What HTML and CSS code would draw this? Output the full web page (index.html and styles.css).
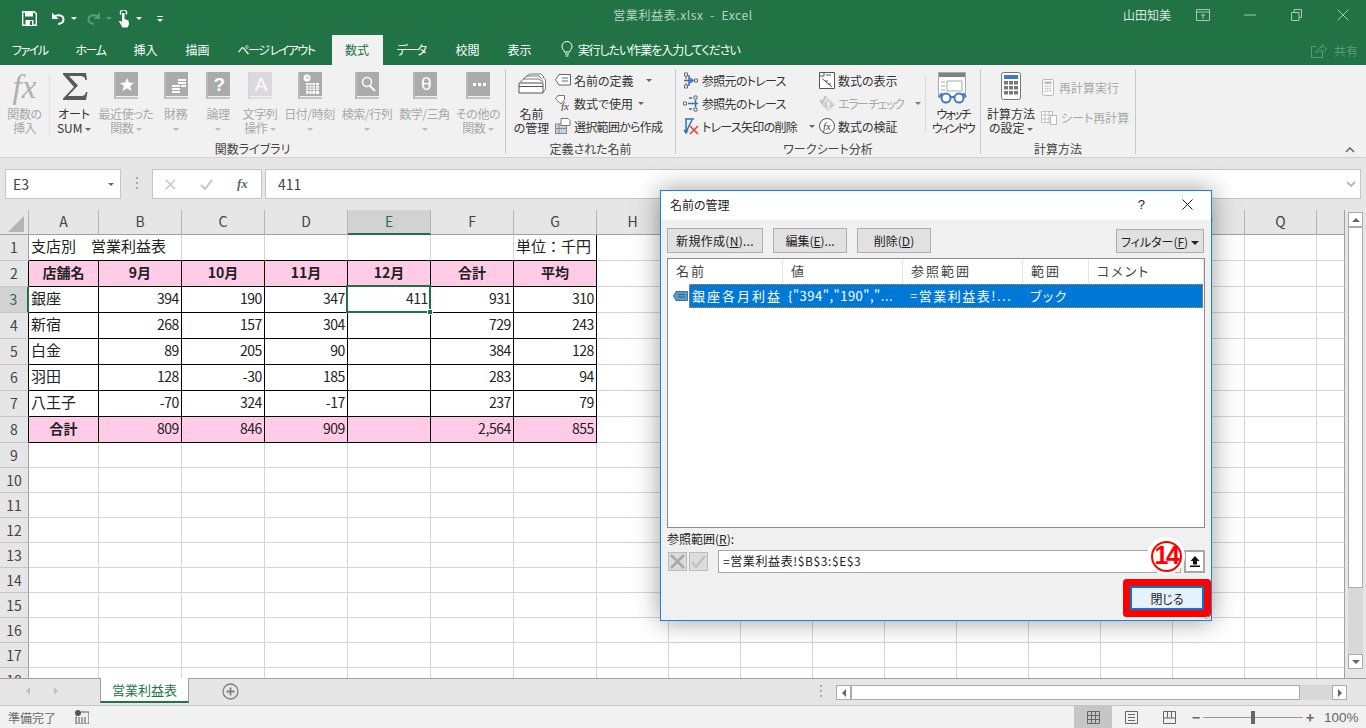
FILE: index.html
```html
<!DOCTYPE html>
<html lang="ja">
<head>
    <meta charset="UTF-8">
    <title>営業利益表.xlsx - Excel</title>
    <link rel="stylesheet" href="styles.css">
</head>
<body>
    <svg class="defs" width="0" height="0">
        <symbol id="book" viewBox="0 0 24 28">
            <rect x="0" y="0" width="2" height="27" fill="#b8b8b8"/>
            <rect x="2" y="0" width="22" height="24" fill="#ababab"/>
            <rect x="2" y="25" width="22" height="2" fill="#c4c4c4"/>
        </symbol>
        <symbol id="book-light" viewBox="0 0 24 28">
            <rect x="0" y="0" width="2" height="27" fill="#d8d4d8"/>
            <rect x="2" y="0" width="22" height="24" fill="#dcd8dc"/>
            <rect x="2" y="25" width="22" height="2" fill="#e0dce0"/>
        </symbol>
    </svg>

    <header class="titlebar">
        <div class="qat">
            <svg class="qat-save" width="15" height="15" viewBox="0 0 15 15"><path d="M.7.7h11.6l2 2v11.6H.7z" fill="none" stroke="#fff" stroke-width="1.4"/><rect x="3" y="1" width="8" height="4.5" fill="#fff"/><rect x="3.5" y="9" width="8" height="5" fill="#fff"/><rect x="8" y="10" width="2" height="4" fill="#217346"/></svg>
            <svg class="qat-undo" width="15" height="15" viewBox="0 0 15 15"><path d="M2 6.5c3-3.500 10-3 10.500 1.500.4 3.500-3 5-5.500 5" fill="none" stroke="#fff" stroke-width="2"/><path d="M1 1.500v6.500h6.500z" fill="#fff"/></svg>
            <span class="caret caret-white"></span>
            <svg class="qat-redo" width="15" height="15" viewBox="0 0 15 15"><path d="M13 6.500c-3-3.500-10-3-10.500 1.500-.4 3.500 3 5 5.500 5" fill="none" stroke="#5c9a7a" stroke-width="2"/><path d="M14 1.500v6.500h-6.500z" fill="#5c9a7a"/></svg>
            <span class="caret caret-dim"></span>
            <svg class="qat-touch" width="14" height="18" viewBox="0 0 14 18"><path d="M4 4.500a3 3 0 1 1 5 0" fill="none" stroke="#fff" stroke-width="1.400"/><path d="M5 3h2.500v6l4 1.500.5 4-1.500 3h-5L2 11.500l1-1 2 1.500z" fill="#fff"/></svg>
            <span class="caret caret-white"></span>
            <span class="qat-more"></span>
        </div>
        <div class="doc-title">営業利益表.xlsx&nbsp; -&nbsp; Excel</div>
        <div class="win-area">
            <span class="user-name">山田知美</span>
            <span class="win-btn"><svg width="14" height="12" viewBox="0 0 14 12"><path d="M.5.500h13v11H.5zM.5 3h13M7 10V5M5 7l2-2 2 2" fill="none" stroke="#a9c9b7"/></svg></span>
            <span class="win-btn"><svg width="12" height="2" viewBox="0 0 12 2"><path d="M0 1h12" stroke="#a9c9b7"/></svg></span>
            <span class="win-btn"><svg width="11" height="12" viewBox="0 0 11 12"><path d="M.5 3.500h7.500v8H.5zM3 3.500V.5h7.500v8H8" fill="none" stroke="#a9c9b7"/></svg></span>
            <span class="win-btn"><svg width="12" height="12" viewBox="0 0 12 12"><path d="M.5.500l11 11M11.500.5l-11 11" stroke="#a9c9b7"/></svg></span>
        </div>
    </header>

    <nav class="tabs">
        <span class="tab kana">ファイル</span>
        <span class="tab kana">ホーム</span>
        <span class="tab">挿入</span>
        <span class="tab">描画</span>
        <span class="tab kana">ページ レイアウト</span>
        <span class="tab active">数式</span>
        <span class="tab kana">データ</span>
        <span class="tab spaced">校閲</span>
        <span class="tab">表示</span>
        <span class="tell-me">
            <svg width="12" height="16" viewBox="0 0 12 16"><path d="M3.500 11C3 9 1 8 1 5.500a5 5 0 0 1 10 0C11 8 9 9 8.500 11zM4 13h4M4.500 15h3" fill="none" stroke="#fff"/></svg>
            <span class="tell-text">実行したい作業を入力してください</span>
        </span>
        <span class="share">
            <svg width="16" height="15" viewBox="0 0 16 15"><path d="M5 3.500H.5v11h11V10M5 10c.5-4 3-5.500 6-5.500V1.500l4.500 4.500L11 10V7.500C8.500 7.500 6.500 8 5 10z" fill="none" stroke="#5c9a7a"/></svg>
            共有
        </span>
    </nav>

    <section class="ribbon">
        <div class="group group-fn">
            <div class="group-body fn-grid">
                <div class="rb-btn off fn-insert">
                    <span class="rb-icon fx-big">fx</span>
                    <span>関数の</span><span>挿入</span>
                </div>
                <div class="rb-btn">
                    <span class="rb-icon"><svg class="sigma" width="25" height="27" viewBox="0 0 25 27"><path d="M0 0h23l1 7h-1.500c-.8-3-2-4-5-4H6l9 9.500L5 23h13c3 0 4-1 5-4h1.500l-1.500 8H0v-1.500L11 14 0 1.500z" fill="#595959"/></svg></span>
                    <span>オート</span><span>SUM <i class="caret"></i></span>
                </div>
                <div class="rb-btn off">
                    <span class="rb-icon"><svg class="book" width="24" height="28"><use href="#book"/><path d="M13 6l2 4.500 5 .4-3.800 3.200 1.300 4.900-4.500-2.700-4.500 2.700 1.300-4.900L6 10.900l5-.4z" fill="#fff"/></svg></span>
                    <span>最近使った</span><span>関数 <i class="caret"></i></span>
                </div>
                <div class="rb-btn off">
                    <span class="rb-icon"><svg width="24" height="28"><use href="#book"/><g fill="#fff"><rect x="8" y="13" width="8" height="2"/><rect x="8" y="16" width="8" height="2"/><rect x="8" y="19" width="8" height="2"/><rect x="14" y="7" width="8" height="2"/><rect x="14" y="10" width="8" height="2"/><rect x="17" y="13" width="5" height="2"/></g></svg></span>
                    <span>財務</span><span><i class="caret"></i></span>
                </div>
                <div class="rb-btn off">
                    <span class="rb-icon"><svg width="24" height="28"><use href="#book"/><text x="13" y="19" class="book-glyph bold">?</text></svg></span>
                    <span>論理</span><span><i class="caret"></i></span>
                </div>
                <div class="rb-btn off">
                    <span class="rb-icon"><svg width="24" height="28"><use href="#book-light"/><text x="13" y="19" class="book-glyph">A</text></svg></span>
                    <span>文字列</span><span>操作 <i class="caret"></i></span>
                </div>
                <div class="rb-btn off">
                    <span class="rb-icon"><svg width="24" height="28"><use href="#book"/><rect x="8" y="11" width="13" height="11" fill="#fff"/><path d="M8 13.500h13M8 16h13M8 18.500h13M11 11v11M14 11v11M17.500 11v11" stroke="#aaa" stroke-width=".8"/><circle cx="9" cy="6" r="3.500" fill="#fff"/><path d="M9 4v2h2" stroke="#999" fill="none" stroke-width=".8"/></svg></span>
                    <span>日付/時刻</span><span><i class="caret"></i></span>
                </div>
                <div class="rb-btn off">
                    <span class="rb-icon"><svg width="24" height="28"><use href="#book"/><circle cx="12" cy="10" r="4.500" fill="none" stroke="#fff" stroke-width="1.500"/><path d="M15 14l5 5" stroke="#fff" stroke-width="2"/></svg></span>
                    <span>検索/行列</span><span><i class="caret"></i></span>
                </div>
                <div class="rb-btn off">
                    <span class="rb-icon"><svg width="24" height="28"><use href="#book"/><text x="13" y="18" class="book-glyph">θ</text></svg></span>
                    <span>数学/三角</span><span><i class="caret"></i></span>
                </div>
                <div class="rb-btn off">
                    <span class="rb-icon"><svg width="24" height="28"><use href="#book"/><g fill="#fff"><rect x="7" y="11" width="3" height="3"/><rect x="12" y="11" width="3" height="3"/><rect x="17" y="11" width="3" height="3"/></g></svg></span>
                    <span>その他の</span><span>関数 <i class="caret"></i></span>
                </div>
            </div>
            <div class="group-label">関数ライブラリ</div>
        </div>

        <div class="group group-names">
            <div class="group-body">
                <div class="rb-btn name-mgr">
                    <span class="rb-icon"><svg width="30" height="28" viewBox="0 0 30 28"><path d="M9 4.500l4-2.500h11l3 3M6 7l4-3h12l3 3M3 10l4-3h15l4 3" fill="#fff" stroke="#777"/><path d="M26 5l2.500 3v9.500L26 20" fill="#fff" stroke="#777"/><path d="M2 11h24v10H2z" fill="#fff" stroke="#555"/><path d="M2 14.500h24" stroke="#555"/></svg></span>
                    <span>名前</span><span>の管理</span>
                </div>
                <div class="rows">
                    <div class="row"><svg width="16" height="12" viewBox="0 0 16 12"><path d="M4 .5h11.500v10.500H4L.5 5.700z" fill="#fff" stroke="#666"/><path d="M7 4h6M7 7h6" stroke="#2e75b6"/></svg>名前の定義<i class="caret gap"></i></div>
                    <div class="row"><svg width="16" height="16" viewBox="0 0 16 16"><path d="M3 .5h6.500v4L6 9 .5 4z" fill="#fff" stroke="#777"/><text x="6" y="14.500" class="fx-small">fx</text></svg>数式で使用<i class="caret"></i></div>
                    <div class="row tight"><svg width="16" height="16" viewBox="0 0 16 16"><rect x=".5" y="6" width="11" height="9.500" fill="#bcd3e8" stroke="#888"/><path d="M4 6v9.500M.5 10.500h11" stroke="#888"/><path d="M6 .5h7l2 2v5H6z" fill="#fff" stroke="#777"/></svg>選択範囲から作成</div>
                </div>
            </div>
            <div class="group-label">定義された名前</div>
        </div>

        <div class="group group-audit">
            <div class="group-body">
                <div class="rows rows-a">
                    <div class="row tight"><svg width="16" height="17" viewBox="0 0 16 17"><path d="M1.500 1h3v3h-3zM1.500 13h3v3h-3zM11.500 7h3v3h-3zM3 4v3M3 11v2" fill="#fff" stroke="#666"/><path d="M1 8.500h9M7 6l3 2.500L7 11M6 3v11" fill="none" stroke="#2e75b6" stroke-width="1.500"/></svg>参照元のトレース</div>
                    <div class="row tight"><svg width="16" height="17" viewBox="0 0 16 17"><path d="M.5 7h3v3h-3zM11 1h3v3h-3zM11 13h3v3h-3z" fill="#fff" stroke="#666"/><path d="M5 8.500h10M12.500 5v7M6 3h3M6 14h3" fill="none" stroke="#2e75b6" stroke-width="1.500"/></svg>参照先のトレース</div>
                    <div class="row tight"><svg width="16" height="17" viewBox="0 0 16 17"><path d="M2 1h9M3 1v13M1 12l2 3 2-3M9 2L4 12" fill="none" stroke="#2e75b6" stroke-width="1.500"/><path d="M7 8l8 8M15 8l-8 8" stroke="#d9502e" stroke-width="1.700"/></svg>トレース矢印の削除<i class="caret gap"></i></div>
                </div>
                <div class="rows rows-b">
                    <div class="row"><svg width="16" height="17" viewBox="0 0 16 17"><path d="M.5.500h15v16H.5z" fill="#fff" stroke="#555"/><path d="M.5 4h4.500V.5M3 6.500L13 15" fill="none" stroke="#555"/><path d="M7 3h5M6 9h3M9 12h3" stroke="#555"/></svg>数式の表示</div>
                    <div class="row off narrow"><svg width="16" height="17" viewBox="0 0 16 17"><path d="M1 5l2 3 4-7" fill="none" stroke="#c0c0c0" stroke-width="2"/><path d="M9 3l7 7-7 6-6-6z" fill="#d0d0d0"/><path d="M9.500 6v5M9.500 12v2" stroke="#fff" stroke-width="1.500"/></svg>エラー チェック<i class="caret gap"></i></div>
                    <div class="row"><svg width="16" height="16" viewBox="0 0 16 16"><circle cx="8" cy="8" r="7.500" fill="#fff" stroke="#555"/><text x="4" y="11.500" class="fx-small">fx</text></svg>数式の検証</div>
                </div>
                <div class="sub-sep"></div>
                <div class="rb-btn watch">
                    <span class="rb-icon"><svg width="30" height="32" viewBox="0 0 30 32"><rect x=".5" y=".5" width="27" height="25" fill="#fff" stroke="#aaa"/><rect x="1" y="1" width="26" height="4" fill="#808080"/><path d="M9 9h15v10H9zM3 10h4M3 14h4M3 18h4" fill="none" stroke="#aaa"/><circle cx="8" cy="26" r="4.500" fill="#fff" stroke="#3d7cc0" stroke-width="2"/><circle cx="21" cy="26" r="4.500" fill="#fff" stroke="#3d7cc0" stroke-width="2"/><path d="M12 25h5M1 25l3-4M28 25l-3-4" stroke="#3d7cc0" stroke-width="2"/></svg></span>
                    <span>ウォッチ</span><span>ウィンドウ</span>
                </div>
            </div>
            <div class="group-label">ワークシート分析</div>
        </div>

        <div class="group group-calc">
            <div class="group-body">
                <div class="rb-btn calc-opt">
                    <span class="rb-icon"><svg width="20" height="28" viewBox="0 0 20 28"><rect x=".5" y=".5" width="19" height="27" rx="2" fill="#fff" stroke="#777"/><rect x="3" y="3" width="14" height="4" fill="#3d7cc0"/><g fill="#777"><rect x="3" y="9" width="4" height="3.500"/><rect x="8" y="9" width="4" height="3.500"/><rect x="13" y="9" width="4" height="3.500"/><rect x="3" y="14" width="4" height="3.500"/><rect x="8" y="14" width="4" height="3.500"/><rect x="13" y="14" width="4" height="3.500"/><rect x="3" y="19" width="4" height="3.500"/><rect x="8" y="19" width="4" height="3.500"/><rect x="13" y="19" width="4" height="3.500"/></g></svg></span>
                    <span>計算方法</span><span>の設定 <i class="caret"></i></span>
                </div>
                <div class="rows rows-calc">
                    <div class="row off"><svg width="14" height="17" viewBox="0 0 14 17"><rect x="1.500" y=".5" width="11" height="16" rx="1.500" fill="#fff" stroke="#bbb"/><rect x="3.500" y="2.500" width="7" height="2.500" fill="#bbb"/><path d="M3.500 7h7M3.500 9.500h7M3.500 12h7" stroke="#bbb" stroke-dasharray="1.500 1" stroke-width="1.500"/></svg>再計算実行</div>
                    <div class="row off"><svg width="16" height="17" viewBox="0 0 16 17"><path d="M.5 2.500h11v11H.5zM.5 6h11M.5 10h11M4 2.500v11M8 2.500v11" fill="#fff" stroke="#c0c0c0"/><rect x="9.500" y="6.500" width="6" height="9" fill="#fff" stroke="#bbb"/></svg>シート再計算</div>
                </div>
            </div>
            <div class="group-label">計算方法</div>
        </div>
        <svg class="collapse" width="10" height="6" viewBox="0 0 10 6"><path d="M1 5l4-4 4 4" fill="none" stroke="#666" stroke-width="1.500"/></svg>
    </section>

    <div class="formula-bar">
        <div class="name-box">E3<i class="caret"></i></div>
        <div class="grip"></div>
        <div class="fx-box">
            <svg width="11" height="11" viewBox="0 0 11 11"><path d="M1 1l9 9M10 1l-9 9" stroke="#c4c4c4" stroke-width="1.500"/></svg>
            <svg width="13" height="11" viewBox="0 0 13 11"><path d="M1 6l4 4 7-9" fill="none" stroke="#c4c4c4" stroke-width="2"/></svg>
            <span class="fx-label">fx</span>
        </div>
        <div class="formula-input">411<svg width="10" height="6" viewBox="0 0 10 6"><path d="M1 1l4 4 4-4" fill="none" stroke="#bbb" stroke-width="2"/></svg></div>
    </div>

    <main class="sheet-area">
        <div class="sheet">
            <table class="grid">
                <colgroup>
                    <col class="c-row"><col class="c-a"><col class="c-n" span="6"><col class="c-w" span="10"><col class="c-r">
                </colgroup>
                <thead>
                    <tr class="head">
                        <th class="corner"><span class="corner-mark"></span></th>
                        <th>A</th><th>B</th><th>C</th><th>D</th><th class="sel">E</th><th>F</th><th>G</th>
                        <th>H</th><th>I</th><th>J</th><th>K</th><th>L</th><th>M</th><th>N</th><th>O</th><th>P</th><th>Q</th><th></th>
                    </tr>
                </thead>
                <tbody>
                    <tr class="tall">
                        <th>1</th>
                        <td class="under" colspan="2">支店別　営業利益表</td><td class="under"></td><td class="under"></td><td class="under"></td><td class="under"></td><td class="under end">単位：千円</td>
                        <td class="fill" colspan="11"></td>
                    </tr>
                    <tr class="tall pink">
                        <th class="edge">2</th>
                        <td class="hd">店舗名</td><td class="hd">9月</td><td class="hd">10月</td><td class="hd">11月</td><td class="hd">12月</td><td class="hd">合計</td><td class="hd">平均</td>
                        <td class="fill" colspan="11"></td>
                    </tr>
                    <tr class="tall">
                        <th class="edge row-sel">3</th>
                        <td class="box">銀座</td><td class="box num">394</td><td class="box num">190</td><td class="box num">347</td><td class="box num">411</td><td class="box num">931</td><td class="box num">310</td>
                        <td class="fill" colspan="11"></td>
                    </tr>
                    <tr class="tall">
                        <th class="edge">4</th>
                        <td class="box">新宿</td><td class="box num">268</td><td class="box num">157</td><td class="box num">304</td><td class="box"></td><td class="box num">729</td><td class="box num">243</td>
                        <td class="fill" colspan="11"></td>
                    </tr>
                    <tr class="tall">
                        <th class="edge">5</th>
                        <td class="box">白金</td><td class="box num">89</td><td class="box num">205</td><td class="box num">90</td><td class="box"></td><td class="box num">384</td><td class="box num">128</td>
                        <td class="fill" colspan="11"></td>
                    </tr>
                    <tr class="tall">
                        <th class="edge">6</th>
                        <td class="box">羽田</td><td class="box num">128</td><td class="box num">-30</td><td class="box num">185</td><td class="box"></td><td class="box num">283</td><td class="box num">94</td>
                        <td class="fill" colspan="11"></td>
                    </tr>
                    <tr class="tall">
                        <th class="edge">7</th>
                        <td class="box">八王子</td><td class="box num">-70</td><td class="box num">324</td><td class="box num">-17</td><td class="box"></td><td class="box num">237</td><td class="box num">79</td>
                        <td class="fill" colspan="11"></td>
                    </tr>
                    <tr class="tall pink">
                        <th class="edge">8</th>
                        <td class="hd">合計</td><td class="box num">809</td><td class="box num">846</td><td class="box num">909</td><td class="box"></td><td class="box num">2,564</td><td class="box num">855</td>
                        <td class="fill" colspan="11"></td>
                    </tr>
                    <tr><th>9</th><td></td><td></td><td></td><td></td><td></td><td></td><td></td><td class="fill" colspan="11"></td></tr>
                    <tr><th>10</th><td></td><td></td><td></td><td></td><td></td><td></td><td></td><td class="fill" colspan="11"></td></tr>
                    <tr><th>11</th><td></td><td></td><td></td><td></td><td></td><td></td><td></td><td class="fill" colspan="11"></td></tr>
                    <tr><th>12</th><td></td><td></td><td></td><td></td><td></td><td></td><td></td><td class="fill" colspan="11"></td></tr>
                    <tr><th>13</th><td></td><td></td><td></td><td></td><td></td><td></td><td></td><td class="fill" colspan="11"></td></tr>
                    <tr><th>14</th><td></td><td></td><td></td><td></td><td></td><td></td><td></td><td class="fill" colspan="11"></td></tr>
                    <tr><th>15</th><td></td><td></td><td></td><td></td><td></td><td></td><td></td><td class="fill" colspan="11"></td></tr>
                    <tr><th>16</th><td></td><td></td><td></td><td></td><td></td><td></td><td></td><td class="fill" colspan="11"></td></tr>
                    <tr><th>17</th><td></td><td></td><td></td><td></td><td></td><td></td><td></td><td class="fill" colspan="11"></td></tr>
                    <tr><th>18</th><td></td><td></td><td></td><td></td><td></td><td></td><td></td><td class="fill" colspan="11"></td></tr>
                </tbody>
            </table>
            <div class="active-cell"><span class="fill-handle"></span></div>
        </div>
        <div class="vscroll">
            <span class="sb-btn"><i class="tri-up"></i></span>
            <span class="sb-thumb"></span>
            <span class="sb-track"></span>
            <span class="sb-btn"><i class="tri-down"></i></span>
        </div>
    </main>

    <div class="tabbar">
        <div class="tab-nav"><i class="tri-left dim"></i><i class="tri-right dim"></i></div>
        <div class="sheet-tab">営業利益表</div>
        <svg class="add-sheet" width="17" height="17" viewBox="0 0 17 17"><circle cx="8.500" cy="8.500" r="7.500" fill="none" stroke="#808080" stroke-width="1.300"/><path d="M8.500 4.500v8M4.500 8.500h8" stroke="#808080" stroke-width="1.800"/></svg>
        <div class="grip grip-h"></div>
        <div class="hscroll">
            <span class="sb-btn"><i class="tri-left"></i></span>
            <span class="sb-thumb"></span>
            <span class="sb-track"></span>
            <span class="sb-btn"><i class="tri-right"></i></span>
        </div>
    </div>

    <footer class="status">
        <span class="ready">準備完了</span>
        <svg class="macro" width="14" height="14" viewBox="0 0 14 14"><circle cx="3" cy="3" r="3" fill="#555"/><path d="M6 2h8v12H1V7h1" fill="none" stroke="#555"/><path d="M3 8h9M3 10h9M3 12h9" stroke="#555" stroke-dasharray="2 1"/></svg>
        <div class="views">
            <span class="view on"><svg width="13" height="13" viewBox="0 0 13 13"><path d="M.5.500h12v12H.5zM.5 4.500h12M.5 8.500h12M4.500.5v12M8.500.5v12" fill="none" stroke="#666"/></svg></span>
            <span class="view"><svg width="13" height="13" viewBox="0 0 13 13"><path d="M.5.500h12v12H.5zM3 3.500h7M3 6.500h7M3 9.500h7" fill="none" stroke="#666"/></svg></span>
            <span class="view"><svg width="13" height="13" viewBox="0 0 13 13"><path d="M.5.500h12v12H.5zM.5 7h12M4.500.5V7M8.500.5V7" fill="none" stroke="#666"/></svg></span>
        </div>
        <div class="zoom">
            <span class="zoom-sign">−</span>
            <span class="zoom-track"><i class="zoom-thumb"></i></span>
            <span class="zoom-sign">+</span>
            <span class="zoom-pct">100%</span>
        </div>
    </footer>

    <div class="dialog">
        <div class="dlg-title">
            <span>名前の管理</span>
            <span class="dlg-help">?</span>
            <svg width="11" height="11" viewBox="0 0 11 11"><path d="M.5.500l10 10M10.500.5l-10 10" stroke="#222"/></svg>
        </div>
        <div class="dlg-tools">
            <button class="dlg-btn btn-new">新規作成(<u>N</u>)...</button>
            <button class="dlg-btn btn-edit">編集(<u>E</u>)...</button>
            <button class="dlg-btn btn-del">削除(<u>D</u>)</button>
            <button class="dlg-btn btn-filter">フィルター(<u>F</u>)<i class="tri-filter"></i></button>
        </div>
        <div class="name-list">
            <div class="list-head">
                <span>名前</span><span>値</span><span>参照範囲</span><span>範囲</span><span>コメント</span>
            </div>
            <div class="list-row">
                <svg width="15" height="10" viewBox="0 0 15 10"><path d="M3 .5h11.500v9H3L.5 5z" fill="#5b9bc8" stroke="#3a7296"/><path d="M5 3.500h7M5 6h7" stroke="#2d6486"/></svg>
                <div class="row-cells">
                    <span>銀座各月利益</span><span>{"394","190","...</span><span>=営業利益表!...</span><span>ブック</span><span></span>
                </div>
            </div>
        </div>
        <label class="ref-label">参照範囲(<u>R</u>):</label>
        <div class="ref-row">
            <span class="ref-check"><svg width="15" height="15" viewBox="0 0 15 15"><path d="M1 1l13 13M14 1L1 14" stroke="#a8a8a8" stroke-width="2.500"/></svg></span>
            <span class="ref-check"><svg width="15" height="15" viewBox="0 0 15 15"><path d="M1 8l4 5 9-11" fill="none" stroke="#bdbdbd" stroke-width="2"/></svg></span>
            <span class="ref-input">=営業利益表!$B$3:$E$3</span>
            <span class="ref-pick"><svg width="10" height="11" viewBox="0 0 10 11"><path d="M5 0l4.500 5H7v3.500H3V5H.5zM0 9.500h10v1.500H0z" fill="#111"/></svg></span>
        </div>
        <div class="dlg-foot">
            <button class="dlg-btn btn-close">閉じる</button>
        </div>
        <svg class="dlg-resize" width="7" height="7" viewBox="0 0 7 7"><path d="M5 1h1v1H5zM3 3h1v1H3zM5 3h1v1H5zM1 5h1v1H1zM3 5h1v1H3zM5 5h1v1H5z" fill="#999"/></svg>
        <div class="step-badge"><span>14</span></div>
    </div>
</body>
</html>
```

FILE: styles.css
```css
* {
    box-sizing: border-box;
}

html, body {
    margin: 0;
    height: 100%;
}

body {
    width: 1366px;
    height: 728px;
    overflow: hidden;
    display: flex;
    flex-direction: column;
    position: relative;
    background-color: #e6e6e6;
    font-family: "Noto Sans CJK JP", "Noto Sans", sans-serif;
    font-feature-settings: "palt";
    font-size: 12px;
    color: #333;
}

.defs {
    position: absolute;
}

i {
    font-style: normal;
}

/* title bar */
.titlebar {
    height: 35px;
    flex: none;
    background-color: #217346;
    display: grid;
    grid-template-columns: 1fr auto 1fr;
    align-items: center;
}

.qat {
    display: flex;
    align-items: center;
    padding-left: 22px;
    padding-top: 2px;
}

.qat-undo {
    margin-left: 14px;
}

.qat-redo {
    margin-left: 9px;
}

.qat-touch {
    margin-left: 5px;
}

.qat .caret {
    margin-left: 5px;
}

.qat-more {
    margin-left: 15px;
    width: 6px;
    height: 6px;
    border-top: 1px solid #fff;
    position: relative;
}

.qat-more::after {
    content: "";
    position: absolute;
    left: 0;
    top: 2px;
    border: 3px solid transparent;
    border-top-color: #fff;
}

.caret {
    display: inline-block;
    width: 0;
    height: 0;
    border: 3px solid transparent;
    border-top: 3px solid #666;
    border-bottom: 0;
    vertical-align: middle;
}

.caret-white {
    border-top-color: #fff;
}

.caret-dim {
    border-top-color: #5c9a7a;
}

.doc-title {
    color: #b8d3c4;
    font-size: 12px;
    letter-spacing: .6px;
    padding-bottom: 6px;
}

.win-area {
    display: flex;
    align-items: center;
    justify-content: flex-end;
    padding-bottom: 6px;
}

.user-name {
    color: #dce9e2;
    margin-right: 9px;
}

.win-btn {
    width: 46.5px;
    display: flex;
    justify-content: center;
}

/* tabs */
.tabs {
    height: 30px;
    flex: none;
    background-color: #217346;
    display: flex;
    align-items: stretch;
    color: #fff;
}

.tab {
    padding: 0 14px 2px;
    display: flex;
    align-items: center;
}

.tab:first-child {
    margin-left: -2px;
}

.tab.kana {
    letter-spacing: -1.5px;
}

.tab.spaced {
    margin-left: 2px;
}

.tab.active {
    background-color: #f1f1f1;
    color: #217346;
    padding: 0 13.5px 2px;
    margin: 0 0 0 3px;
}

.tell-me {
    display: flex;
    align-items: center;
    gap: 5px;
    margin-left: 15px;
    padding-bottom: 2px;
}

.tell-text {
    letter-spacing: -1.05px;
}

.share {
    margin-left: auto;
    margin-right: 8px;
    display: flex;
    align-items: center;
    gap: 7px;
    color: #5c9a7a;
}

/* ribbon */
.ribbon {
    height: 93px;
    flex: none;
    background-color: #f1f1f1;
    border-bottom: 1px solid #d2d2d2;
    padding-top: 4px;
    display: flex;
}

.group {
    height: 85px;
    border-right: 1px solid #c8c8c8;
    display: flex;
    flex-direction: column;
}

.group-body {
    height: 73px;
    flex: none;
    display: flex;
}

.group-label {
    text-align: center;
    line-height: 14px;
    color: #444;
}

.group-fn {
    width: 506px;
}

.group-names {
    width: 170px;
}

.group-audit {
    width: 305px;
}

.group-calc {
    width: 155px;
}

.fn-grid {
    display: grid;
    grid-template-columns: 50px 48px 56px 43px 42px 42px 57px 58px 57px 50px;
}

.rb-btn {
    display: flex;
    flex-direction: column;
    align-items: center;
    line-height: 14px;
    white-space: nowrap;
    color: #333;
}

.rb-btn.off {
    color: #a8a8a8;
    letter-spacing: -.4px;
}

.rb-btn.off .caret {
    border-top-color: #bbb;
}

.rb-icon {
    height: 38px;
    padding-top: 3px;
    display: flex;
    justify-content: center;
    align-items: flex-start;
    flex: none;
}

.sigma {
    margin-left: 2px;
    margin-top: 1px;
}

.fn-insert {
    border-right: 1px solid #dcdcdc;
    height: 62px;
    margin-top: 5px;
}

.fn-insert .rb-icon {
    height: 33px;
    padding-top: 0;
}

.fx-big {
    font-family: "Liberation Serif", serif;
    font-style: italic;
    font-size: 33px;
    line-height: 26px;
    letter-spacing: 0;
    color: #b0b0b0;
}

.book-glyph {
    font-family: "Liberation Sans", sans-serif;
    font-size: 19px;
    fill: #fff;
    text-anchor: middle;
}

.bold {
    font-weight: bold;
}

.fx-small {
    font-family: "Liberation Serif", serif;
    font-style: italic;
    font-size: 11px;
    fill: #444;
}

.rows {
    display: flex;
    flex-direction: column;
}

.row {
    height: 23px;
    display: flex;
    align-items: center;
    gap: 3px;
    white-space: nowrap;
    color: #333;
    padding-bottom: 1px;
}

.row.tight {
    letter-spacing: -.7px;
}

.row.narrow {
    letter-spacing: -1.5px;
}

.row.off {
    color: #a8a8a8;
}

.row svg {
    flex: none;
}

.row .caret {
    margin-left: 2px;
}

.row .caret.gap {
    margin-left: 9px;
}

.row.off .caret {
    border-top-color: #777;
}

.name-mgr {
    width: 47px;
    margin-left: 2px;
}

.rows-a {
    margin-left: 7px;
    width: 136px;
}

.rows-b {
    width: 106px;
}

.sub-sep {
    width: 1px;
    height: 58px;
    margin-top: 6px;
    background-color: #dcdcdc;
}

.watch {
    width: 54px;
    letter-spacing: -1.8px;
}

.calc-opt {
    width: 60px;
}

.rows-calc {
    margin-top: 4px;
}

.rows-calc .row {
    height: 30px;
    gap: 4px;
}

.collapse {
    margin-left: auto;
    margin-right: 11px;
    margin-top: 78px;
}

/* formula bar */
.formula-bar {
    height: 52px;
    flex: none;
    padding: 11px 5px 11px;
    display: flex;
    align-items: stretch;
}

.name-box {
    width: 116px;
    background-color: #fff;
    border: 1px solid #c6c6c6;
    display: flex;
    align-items: center;
    justify-content: space-between;
    padding: 0 6px 0 7px;
    font-size: 14px;
    color: #444;
}

.grip {
    width: 2px;
    margin: 8px 14px 8px 15px;
    background: repeating-linear-gradient(to bottom, #aaa 0 2px, transparent 2px 5px);
}

.fx-box {
    width: 110px;
    background-color: #fff;
    border: 1px solid #c6c6c6;
    display: flex;
    align-items: center;
    padding-left: 12px;
    gap: 24px;
}

.fx-label {
    font-family: "Liberation Serif", serif;
    font-style: italic;
    font-weight: bold;
    font-size: 13px;
    color: #666;
}

.formula-input {
    flex: 1;
    margin-left: 3px;
    background-color: #fff;
    border: 1px solid #c6c6c6;
    display: flex;
    align-items: center;
    justify-content: space-between;
    padding: 0 4px 0 12px;
    font-size: 14px;
    color: #444;
}

/* sheet */
.sheet-area {
    height: 468px;
    flex: none;
    display: flex;
}

.sheet {
    width: 1345px;
    flex: none;
    position: relative;
    overflow: hidden;
}

.grid {
    border-collapse: separate;
    border-spacing: 0;
    table-layout: fixed;
    width: 1345px;
    background-color: #fff;
    font-size: 15px;
    font-feature-settings: normal;
    color: #222;
}

.c-row {
    width: 29px;
}

.c-a {
    width: 70px;
}

.c-n {
    width: 83px;
}

.c-w {
    width: 72px;
}

.c-r {
    width: 28px;
}

.grid th, .grid td {
    padding: 0;
    height: 25px;
    line-height: 16px;
    overflow: hidden;
    white-space: nowrap;
    border-right: 1px solid #d4d4d4;
    border-bottom: 1px solid #d4d4d4;
}

.grid tr > :last-child {
    border-right-color: #a0a0a0;
}

.grid th {
    background-color: #e6e6e6;
    font-weight: normal;
    font-size: 14px;
    color: #444;
    text-align: center;
    padding-bottom: 2px;
    border-right-color: #a0a0a0;
    border-bottom-color: #c6c6c6;
}

.grid tbody tr:not(.tall) th {
    padding-bottom: 0;
}

.grid td {
    padding: 0 2px 3px;
}

.head th {
    height: 25px;
    border-right-color: #b4b4b4;
    border-bottom-color: #a0a0a0;
}

.head th.sel {
    background-color: #d2d2d2;
    color: #217346;
    border-bottom: 2px solid #217346;
}

.corner {
    position: relative;
}

.corner-mark {
    position: absolute;
    left: 8px;
    bottom: 2px;
    width: 0;
    height: 0;
    border-left: 16px solid transparent;
    border-bottom: 16px solid #b4b4b4;
}

.grid .tall th, .grid .tall td {
    height: 26px;
}

.grid th.edge {
    border-right-color: #000;
}

.grid th.row-sel {
    background-color: #d2d2d2;
    color: #217346;
    border-right: 2px solid #217346;
}

.grid td.under {
    border-bottom-color: #000;
}

.grid td.end {
    border-right-color: #000;
    color: #222;
}

.grid td.box {
    border-right-color: #000;
    border-bottom-color: #000;
}

.grid td.hd {
    border-right-color: #000;
    border-bottom-color: #000;
    font-weight: bold;
    text-align: center;
    font-size: 14px;
}

.pink td {
    background-color: #ffcbe6;
}

.grid .pink td.fill {
    background-color: transparent;
}

.grid td.num {
    text-align: right;
    font-size: 14px;
    letter-spacing: -.4px;
}

.grid td.fill {
    padding: 0;
    background: repeating-linear-gradient(to right, transparent 0 71px, #d4d4d4 71px 72px);
    border-right-color: #a0a0a0;
}

.active-cell {
    position: absolute;
    left: 346px;
    top: 75px;
    width: 85px;
    height: 28px;
    border: 2px solid #217346;
}

.fill-handle {
    position: absolute;
    right: -4px;
    bottom: -4px;
    width: 6px;
    height: 6px;
    background-color: #217346;
    border: 1px solid #fff;
}

.vscroll {
    width: 15px;
    margin: 2px 0 9px 3px;
    display: flex;
    flex-direction: column;
}

.sb-btn {
    flex: none;
    width: 15px;
    height: 15px;
    background-color: #fff;
    border: 1px solid #ababab;
    display: flex;
    align-items: center;
    justify-content: center;
}

.sb-thumb {
    display: block;
    background-color: #fff;
    border: 1px solid #ababab;
}

.vscroll .sb-thumb {
    height: 361px;
}

.sb-track {
    flex: 1;
    background-color: #d8d8d8;
}

.tri-up {
    border: 4px solid transparent;
    border-top: 0;
    border-bottom: 4px solid #666;
}

.tri-down {
    border: 4px solid transparent;
    border-bottom: 0;
    border-top: 4px solid #666;
}

.tri-left {
    border: 4px solid transparent;
    border-left: 0;
    border-right: 4px solid #666;
}

.tri-right {
    border: 4px solid transparent;
    border-right: 0;
    border-left: 4px solid #666;
}

/* sheet tabs */
.tabbar {
    height: 28px;
    flex: none;
    border-top: 1px solid #a0a0a0;
    border-bottom: 1px solid #c6c6c6;
    display: flex;
    align-items: flex-start;
}

.tab-nav {
    width: 100px;
    height: 24px;
    display: flex;
    align-items: center;
    padding-left: 26px;
    gap: 24px;
}

.tab-nav .dim {
    border-left-color: #c0c0c0;
    border-right-color: #c0c0c0;
}

.sheet-tab {
    width: 89px;
    height: 25px;
    margin-top: -1px;
    background-color: #fff;
    border: 1px solid #a0a0a0;
    border-top: 0;
    border-bottom: 2px solid #217346;
    color: #217346;
    font-size: 13px;
    text-align: center;
    line-height: 24px;
}

.add-sheet {
    margin: 4px 0 0 33px;
}

.grip-h {
    height: 14px;
    margin: 6px 14px 0 581px;
}

.hscroll {
    width: 511px;
    height: 15px;
    margin-top: 6px;
    display: flex;
}

.hscroll .sb-thumb {
    width: 449px;
}

/* status bar */
.status {
    flex: 1;
    background-color: #f1f1f1;
    display: flex;
    align-items: center;
    color: #666;
}

.ready {
    margin-left: 8px;
}

.macro {
    margin-left: 19px;
}

.views {
    margin-left: 985px;
    align-self: stretch;
    display: flex;
}

.view {
    width: 38px;
    display: flex;
    align-items: center;
    justify-content: center;
}

.view.on {
    background-color: #c6c6c6;
}

.zoom {
    display: flex;
    align-items: center;
    margin-left: 1px;
}

.zoom-sign {
    width: 14px;
    text-align: center;
    font-weight: bold;
    font-size: 14px;
    line-height: 14px;
}

.zoom-track {
    width: 100px;
    height: 1px;
    background-color: #999;
    position: relative;
}

.zoom-thumb {
    position: absolute;
    left: 48px;
    top: -6px;
    width: 4px;
    height: 13px;
    background-color: #666;
}

.zoom-pct {
    margin-left: 7px;
    font-family: "Liberation Sans", sans-serif;
    font-size: 13.5px;
}

/* name manager dialog */
.dialog {
    position: absolute;
    left: 660px;
    top: 190px;
    width: 552px;
    height: 431px;
    background-color: #f0f0f0;
    border: 1px solid #1883d7;
    box-shadow: 0 0 24px rgba(0, 0, 0, .4);
    display: flex;
    flex-direction: column;
    padding: 0 6px;
    color: #222;
}

.dlg-title {
    height: 29px;
    flex: none;
    margin: 0 -6px;
    padding: 0 18px 3px 9px;
    background-color: #fff;
    display: flex;
    align-items: center;
}

.dlg-help {
    margin-left: auto;
    margin-right: 37px;
    font-family: "Liberation Sans", sans-serif;
    font-size: 13px;
}

.dlg-tools {
    margin-top: 8px;
    display: flex;
    align-items: flex-end;
    height: 25px;
    gap: 10px;
    flex: none;
}

.dlg-btn {
    height: 25px;
    padding: 0;
    border: 1px solid #adadad;
    background-color: #e1e1e1;
    font-family: inherit;
    font-feature-settings: inherit;
    font-size: 12px;
    color: #222;
}

.btn-new {
    width: 96px;
    letter-spacing: .3px;
}

.btn-edit {
    width: 74px;
}

.btn-del {
    width: 74px;
}

.btn-filter {
    width: 88px;
    height: 24px;
    margin-left: auto;
    margin-right: 1px;
}

.tri-filter {
    display: inline-block;
    margin-left: 3px;
    vertical-align: middle;
    border: 4px solid transparent;
    border-bottom: 0;
    border-top: 4px solid #222;
}

.name-list {
    margin-top: 5px;
    height: 270px;
    flex: none;
    background-color: #fff;
    border: 1px solid #8c8c8c;
    font-size: 13px;
    overflow: hidden;
}

.list-head {
    height: 25px;
    display: grid;
    grid-template-columns: 115px 120px 120px 66px 1fr;
    align-items: center;
    color: #444;
    letter-spacing: 2px;
}

.list-head span {
    height: 100%;
    padding-left: 8px;
    line-height: 23px;
    border-right: 1px solid #e5e5e5;
}

.list-row {
    height: 24px;
    display: flex;
    align-items: center;
    padding-left: 5px;
}

.list-row svg {
    flex: none;
}

.row-cells {
    margin-left: 1px;
    width: 514px;
    height: 24px;
    background-color: #0078d7;
    outline: 1px dotted #e08a2c;
    outline-offset: -1px;
    color: #fff;
    display: grid;
    grid-template-columns: 96px 122px 120px 66px 1fr;
    align-items: center;
    line-height: 21px;
}

.row-cells span {
    padding-left: 3px;
    padding-bottom: 2px;
    white-space: nowrap;
    letter-spacing: 1.5px;
}

.row-cells span:first-child {
    letter-spacing: 2px;
}

.row-cells span:nth-child(2) {
    letter-spacing: .5px;
}

.ref-label {
    margin-top: 2px;
    line-height: 18px;
    height: 18px;
    flex: none;
}

.ref-row {
    margin-top: 2px;
    height: 23px;
    flex: none;
    display: flex;
    align-items: center;
    gap: 2px;
    padding-left: 1px;
}

.ref-check {
    width: 19px;
    height: 19px;
    border: 1px solid #bbb;
    background-color: #dcdcdc;
    display: flex;
    align-items: center;
    justify-content: center;
}

.ref-input {
    width: 463px;
    height: 23px;
    margin-left: 8px;
    background-color: #fff;
    border: 1px solid #a8a8a8;
    padding-left: 4px;
    line-height: 20px;
    font-size: 12px;
    letter-spacing: .6px;
}

.ref-pick {
    width: 21px;
    height: 23px;
    margin-left: 1px;
    border: 2px solid #a8a8a8;
    background-color: #fff;
    display: flex;
    align-items: center;
    justify-content: center;
}

.dlg-foot {
    margin-top: 13px;
    flex: none;
    display: flex;
    justify-content: flex-end;
    padding-right: 1px;
}

.btn-close {
    width: 74px;
    height: 24px;
    background-color: #e5f1fb;
    border: 2px solid #0078d7;
    border-radius: 1px;
    box-shadow: 0 0 0 7px #f00;
}

.dlg-resize {
    position: absolute;
    right: 0;
    bottom: 0;
}

.step-badge {
    position: absolute;
    left: 486px;
    top: 346px;
    width: 38px;
    height: 38px;
    border-radius: 50%;
    background-color: #fff;
    display: flex;
    align-items: center;
    justify-content: center;
}

.step-badge span {
    width: 31px;
    height: 31px;
    border-radius: 50%;
    border: 2.5px solid #f00;
    color: #f00;
    font-family: "Liberation Sans", sans-serif;
    font-weight: bold;
    font-size: 25px;
    letter-spacing: -2.5px;
    line-height: 25px;
    text-align: center;
}
```
